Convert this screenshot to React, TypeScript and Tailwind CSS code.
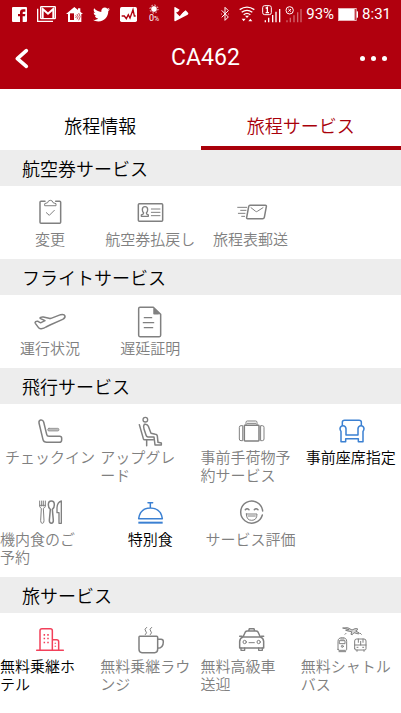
import type { ReactNode } from "react";
import clsx from "clsx";
import { FaTwitter } from "react-icons/fa";

type Service = {
  label: string;
  icon: ReactNode;
  color?: string;
};

type Section = {
  title: string;
  services: Service[];
};

function Icon({ children }: { children: ReactNode }) {
  return (
    <svg
      viewBox="0 0 96 96"
      className="size-8 overflow-visible"
      fill="none"
      stroke="currentColor"
      strokeWidth="4.5"
      strokeLinecap="round"
      strokeLinejoin="round"
      aria-hidden="true"
    >
      {children}
    </svg>
  );
}

const ClipboardIcon = (
  <Icon>
    <path d="M33 16H21q-3 0-3 3v60q0 3 3 3h56q3 0 3-3V19q0-3-3-3H65" />
    <path d="M32 28v-5l9-3q1-7 8-7t8 7l9 3v5z" strokeWidth="3" />
    <path d="M37 50l9 8 15-15" strokeWidth="3" />
  </Icon>
);

const IdCardIcon = (
  <Icon>
    <rect x="13" y="23" width="73" height="53" rx="3" />
    <path
      d="M29 51q-4-5-4-10c0-12 16-12 16 0q0 5-4 10 0 4 6 6v4H22v-4q7-2 7-6z"
      strokeWidth="4"
    />
    <path d="M52 39h26M52 49h26M52 59h26" strokeWidth="3" />
  </Icon>
);

const MailIcon = (
  <Icon>
    <path d="M45 28h46q4 0 3 4l-6 32q-1 4-5 4H38q-4 0-3-4l6-32q1-4 4-4z" />
    <path d="M48 35l14 11q2 2 5 0l17-11" strokeWidth="3" />
    <path d="M8 34h27M17 43h16M10 52h20M20 61h9" strokeWidth="3" />
  </Icon>
);

const PlaneIcon = (
  <Icon>
    <path d="M80 29L51 40q-3 1-6 0l-17-4q-4-1-8 1-4 2 0 4l13 6-12 6q-2 1-4-1l-5-3q-4-1-7 1-3 2-1 5l9 12q3 5 9 4 8-1 14-5l12-6 38-17q8-4 7-10-2-6-13-4z" />
  </Icon>
);

const DocumentIcon = (
  <Icon>
    <path d="M18 7h40l22 21v63q0 4-4 4H18q-4 0-4-4V11q0-4 4-4z" />
    <path d="M60 13v13h13z" fill="currentColor" />
    <path d="M31 38h22M28 53h31M31 68h25" strokeWidth="4" />
  </Icon>
);

const SeatIcon = (
  <Icon>
    <path d="M15 27q-1-8 5-9 7-1 9 6l9 37q1 6 7 6h32q6 0 6 6v5q0 7-7 7H38q-9 0-11-8z" />
    <rect
      x="41"
      y="43"
      width="34"
      height="8"
      rx="4"
      fill="#bbb"
      strokeWidth="2"
    />
  </Icon>
);

const UpgradeIcon = (
  <Icon>
    <circle cx="34" cy="17" r="7" strokeWidth="4" />
    <path d="M16 32l12 42q1 3 4 3h26M38 78v17" />
    <path d="M31 31q-4 5-1 14l6 18q1 5 6 6h18l3 24h19v-6l-10-2-2-19q-1-5-6-5l-13-3-8-21q-3-8-12-6z" />
  </Icon>
);

const LuggageIcon = (
  <Icon>
    <path
      d="M33 33v-8q0-4 4-4h25q4 0 4 4v8M37 28h25"
      strokeWidth="3"
    />
    <rect x="28" y="34" width="44" height="47" rx="2" />
    <path
      d="M22 35h-4q-5 0-5 5v35q0 5 5 5h4zM78 35h4q5 0 5 5v35q0 5-5 5h-4z"
      strokeWidth="3"
    />
  </Icon>
);

const ArmchairIcon = (
  <Icon>
    <path d="M22 34V25q0-6 7-6h43q7 0 7 6v9" />
    <path d="M33 63h36V44q1-9 9-9t9 9q0 4-3 8v31H70v-9H32v9H18V52q-3-4-3-8 1-9 9-9t9 9z" />
  </Icon>
);

const CutleryIcon = (
  <Icon>
    <path
      d="M17 15v15q0 5 5 7l-2 37q0 8 5 8t5-8l-2-37q6-2 6-7V15M23 15v15M28 15v15M17 28h17"
      strokeWidth="3"
    />
    <path d="M52 15q-9 0-9 11 0 10 6 14l-3 33q0 9 6 9t6-9l-3-33q6-4 6-14 0-11-9-11z" />
    <path d="M82 15q-12 4-13 20v15h6v32h7z" strokeWidth="4" />
  </Icon>
);

const BellIcon = (
  <Icon>
    <path d="M42 20h14M49 20v15M14 68q1-9 6-18 9-14 29-14t30 14q5 9 6 18z" />
    <path d="M13 80h73" strokeWidth="6" strokeLinecap="butt" />
  </Icon>
);

const SmileIcon = (
  <Icon>
    <path d="M83 45a33 33 0 1 0-1 12" />
    <path d="M31 41q5-6 11 0M58 41q5-6 11 0" />
    <path d="M34 54h32q0 19-16 19T34 54zM39 60h22" strokeWidth="3" />
  </Icon>
);

const HotelIcon = (
  <Icon>
    <path d="M8 82h80M18 82V23q0-6 6-6h25q6 0 6 6v59M55 50h13q6 0 6 6v26" />
    <path
      d="M31 33v5M42 33v5M31 44v5M42 44v5M31 56v5M42 56v5M64 59v3M64 68v3"
      strokeLinecap="butt"
    />
  </Icon>
);

const CoffeeIcon = (
  <Icon>
    <path d="M17 40h51q3 0 3 3v36q0 10-9 10H24q-9 0-9-10V43q0-3 2-3zM71 49h10q7 0 7 7 0 19-17 20" />
    <path
      d="M38 13q-9 6-3 11t-1 11M53 13q-9 6-3 11t-1 11"
      strokeWidth="3"
    />
  </Icon>
);

const TaxiIcon = (
  <Icon>
    <path d="M41 24l2-7h14l2 7M24 42l7-15q2-3 6-3h26q4 0 6 3l7 15M24 42h52M24 42q-9 3-10 13v20h72V55q-1-10-10-13M14 40h7M79 40h7" />
    <path d="M18 75v7h11v-7M71 75v7h11v-7" strokeWidth="4" />
    <circle cx="29" cy="57" r="5" strokeWidth="3" />
    <circle cx="71" cy="57" r="5" strokeWidth="3" />
    <path d="M42 59h16" strokeWidth="3" />
  </Icon>
);

const ShuttleIcon = (
  <Icon>
    <g strokeWidth="3">
      <path
        d="M24 15l14-1 13 7 9-4q8-1 9 2l-7 5 11 6-2 3-14-4-5 6-4-1 2-8-11-2-7-2 9-2z"
        fill="currentColor"
        fillOpacity="0.3"
      />
      <path d="M30 34l3-3M76 31l3 3" />
      <path d="M9 79V55q0-11 13-11t13 11v24q0 3-3 3H12q-3 0-3-3zM14 53h16v9H14zM17 48h10M12 86h20" />
      <circle cx="22" cy="70" r="3" />
      <path d="M59 77V54q0-6 6-6h22q6 0 6 6v23q0 4-4 4H63q-4 0-4-4zM59 66h34M70 48v10M77 55v11M84 48v10M66 81v4M87 81v4M66 73h3M83 73h3" />
    </g>
  </Icon>
);

const sections: Section[] = [
  {
    title: "航空券サービス",
    services: [
      { label: "変更", icon: ClipboardIcon },
      { label: "航空券払戻し", icon: IdCardIcon },
      { label: "旅程表郵送", icon: MailIcon },
    ],
  },
  {
    title: "フライトサービス",
    services: [
      { label: "運行状況", icon: PlaneIcon },
      { label: "遅延証明", icon: DocumentIcon },
    ],
  },
  {
    title: "飛行サービス",
    services: [
      { label: "チェックイン", icon: SeatIcon },
      { label: "アップグレ\nード", icon: UpgradeIcon },
      { label: "事前手荷物予\n約サービス", icon: LuggageIcon },
      { label: "事前座席指定", icon: ArmchairIcon, color: "text-[#3b80d2]" },
      { label: "機内食のご\n予約", icon: CutleryIcon },
      { label: "特別食", icon: BellIcon, color: "text-[#3b80d2]" },
      { label: "サービス評価", icon: SmileIcon },
    ],
  },
  {
    title: "旅サービス",
    services: [
      { label: "無料乗継ホ\nテル", icon: HotelIcon, color: "text-[#f2405a]" },
      { label: "無料乗継ラウ\nンジ", icon: CoffeeIcon },
      { label: "無料高級車\n送迎", icon: TaxiIcon },
      { label: "無料シャトル\nバス", icon: ShuttleIcon },
    ],
  },
];

function StatusBar() {
  return (
    <div className="flex h-7 items-center justify-between pr-2.5 pl-3 font-[Roboto,sans-serif] font-normal">
      <div className="flex items-center gap-2.5">
        <svg viewBox="0 0 45 45" className="size-[15px]" aria-hidden="true">
          <rect width="45" height="45" rx="3" fill="#fff" />
          <path
            d="M24 45V28h-6v-7h6v-5q0-9 9-9h7v7h-5q-3 0-3 3v4h8l-1 7h-7v17z"
            fill="#b1000e"
          />
        </svg>
        <svg
          viewBox="0 0 57 48"
          className="h-4 w-[19px]"
          fill="none"
          stroke="#fff"
          aria-hidden="true"
        >
          <path d="M2 8v38h46" strokeWidth="4" />
          <rect x="11" y="2" width="44" height="36" rx="2" strokeWidth="4" />
          <path d="M17 36V9l16 14L49 9v27" strokeWidth="6" />
        </svg>
        <svg
          viewBox="0 0 51 45"
          className="h-[15px] w-[17px]"
          aria-hidden="true"
        >
          <path d="M25 0L0 21h6v24h40V21h5l-8-7V4h-7v5z" fill="#fff" />
          <path
            d="M29 25q4 4 0 8M33 21q7 8 0 16M38 18q9 11 0 22"
            fill="none"
            stroke="#b1000e"
            strokeWidth="2"
          />
          <path d="M12 19h12v20H12z" fill="#b1000e" />
        </svg>
        <FaTwitter className="size-[17px] text-white" />
        <svg
          viewBox="0 0 51 45"
          className="h-[15px] w-[17px]"
          aria-hidden="true"
        >
          <rect width="51" height="45" rx="5" fill="#fff" />
          <path
            d="M5 27h8l6 8 6-12 5 10 9-25 4 19h4"
            fill="none"
            stroke="#b1000e"
            strokeWidth="4"
          />
        </svg>
        <div className="flex w-3.5 flex-col items-center text-[9px] leading-[9px] text-white">
          <svg
            viewBox="0 0 30 30"
            className="size-2.5"
            fill="#fff"
            stroke="#fff"
            aria-hidden="true"
          >
            <circle cx="15" cy="15" r="8" />
            <circle
              cx="15"
              cy="15"
              r="12"
              fill="none"
              strokeWidth="3"
              strokeDasharray="4 5.4"
            />
          </svg>
          <span>
            0<span className="text-[7px]">%</span>
          </span>
        </div>
        <svg
          viewBox="0 0 54 48"
          className="h-4 w-[18px]"
          aria-hidden="true"
        >
          <path
            d="M12 3l14 8-7 9 6 7 19-14 7 7q3 3-1 6L14 45q-4 2-4-2V5q0-3 2-2z"
            fill="#fff"
          />
          <path
            d="M17 19l9 9 16-20"
            fill="none"
            stroke="#b1000e"
            strokeWidth="4"
          />
        </svg>
      </div>
      <div className="flex items-center gap-1 text-[15px] text-white">
        <div className="flex">
          <svg
            viewBox="0 0 66 48"
            className="h-4 w-[22px]"
            fill="none"
            stroke="#fff"
            strokeWidth="3"
            aria-hidden="true"
          >
            <path d="M23 13l20 20-10 10V4l10 10-20 20M22 24h2M42 24h2" />
          </svg>
          <svg
            viewBox="0 0 66 48"
            className="h-4 w-[22px]"
            fill="none"
            stroke="#fff"
            strokeWidth="4"
            aria-hidden="true"
          >
            <path d="M11 11q22-15 44 0M17 19q16-12 32 0M23 26q10-8 20 0" />
            <path
              d="M27 29h12l-6 7zM17 38h12l-6 8zM37 46h12l-6-8z"
              fill="#fff"
              stroke="none"
            />
          </svg>
        </div>
        <svg
          viewBox="0 0 57 54"
          className="h-[18px] w-[19px]"
          fill="none"
          stroke="#fff"
          aria-hidden="true"
        >
          <rect x="2" y="2" width="26" height="27" rx="6" strokeWidth="3" />
          <path d="M11 10l5-3v16M11 23h10" strokeWidth="4" />
          <path
            d="M10 52v-6M20 52V38M32 52V30M42 52V20M53 52V12"
            strokeWidth="4"
          />
        </svg>
        <svg
          viewBox="0 0 51 54"
          className="h-[18px] w-[17px]"
          fill="none"
          stroke="#fff"
          aria-hidden="true"
        >
          <circle cx="14" cy="16" r="11" strokeWidth="3" />
          <path d="M10 12l8 8M18 12l-8 8" strokeWidth="3" />
          <path
            d="M6 52v-6M16 52V38M27 52V31M38 52V22M48 52V12"
            strokeWidth="4"
            opacity="0.4"
          />
        </svg>
        <span>93%</span>
        <svg viewBox="0 0 60 39" className="h-[13px] w-5" aria-hidden="true">
          <rect
            x="1.5"
            y="1.5"
            width="53"
            height="36"
            fill="none"
            stroke="#fff"
            strokeWidth="3"
            opacity="0.7"
          />
          <rect x="3" y="3" width="47" height="33" fill="#fff" />
          <rect x="56" y="10" width="4" height="19" fill="#fff" />
        </svg>
        <span>8:31</span>
      </div>
    </div>
  );
}

function Header() {
  return (
    <header className="bg-[#b1000e]">
      <StatusBar />
      <div className="flex h-[61px] items-center justify-between pr-3.5 pl-3">
        <button type="button" aria-label="戻る" className="w-13 text-white">
          <svg
            viewBox="0 0 60 72"
            className="h-6 w-5"
            fill="none"
            stroke="currentColor"
            strokeWidth="11"
            strokeLinecap="round"
            strokeLinejoin="round"
            aria-hidden="true"
          >
            <path d="M43 11L16 35l27 23" />
          </svg>
        </button>
        <h1 className="font-[Roboto,sans-serif] text-[23px] font-normal text-white">
          CA462
        </h1>
        <button
          type="button"
          aria-label="メニュー"
          className="flex w-10 justify-end gap-1.5"
        >
          <span className="size-[5px] rounded-full bg-white" />
          <span className="size-[5px] rounded-full bg-white" />
          <span className="size-[5px] rounded-full bg-white" />
        </button>
      </div>
    </header>
  );
}

function Tabs() {
  return (
    <div role="tablist" className="grid h-[61px] grid-cols-2 text-lg">
      <button
        type="button"
        role="tab"
        aria-selected="false"
        className="border-b-4 border-transparent pt-3.5 text-black"
      >
        旅程情報
      </button>
      <button
        type="button"
        role="tab"
        aria-selected="true"
        className="border-b-4 border-[#a9000a] pt-3.5 text-[#a9000a]"
      >
        旅程サービス
      </button>
    </div>
  );
}

function ServiceButton({ label, icon, color }: Service) {
  return (
    <button
      type="button"
      disabled={!color}
      className="flex flex-col items-center gap-0.5"
    >
      <span className={color ?? "text-[#808080]"}>{icon}</span>
      <span
        className={clsx(
          "text-[15px] leading-[18px] whitespace-pre",
          color ? "text-black" : "text-[#808080]",
          label.includes("\n") && "w-full text-left",
        )}
      >
        {label}
      </span>
    </button>
  );
}

export default function App() {
  return (
    <div className="min-h-screen bg-white font-[350] font-['Noto_Sans_CJK_JP',sans-serif]">
      <Header />
      <Tabs />
      <main>
        {sections.map((section) => (
          <section key={section.title}>
            <h2 className="flex h-9 items-center bg-[#ededed] px-[22px] text-lg font-[350] text-black">
              {section.title}
            </h2>
            <div className="grid grid-cols-4 items-start gap-y-3 pt-2.5 pb-[11px]">
              {section.services.map((service) => (
                <ServiceButton key={service.label} {...service} />
              ))}
            </div>
          </section>
        ))}
      </main>
    </div>
  );
}
